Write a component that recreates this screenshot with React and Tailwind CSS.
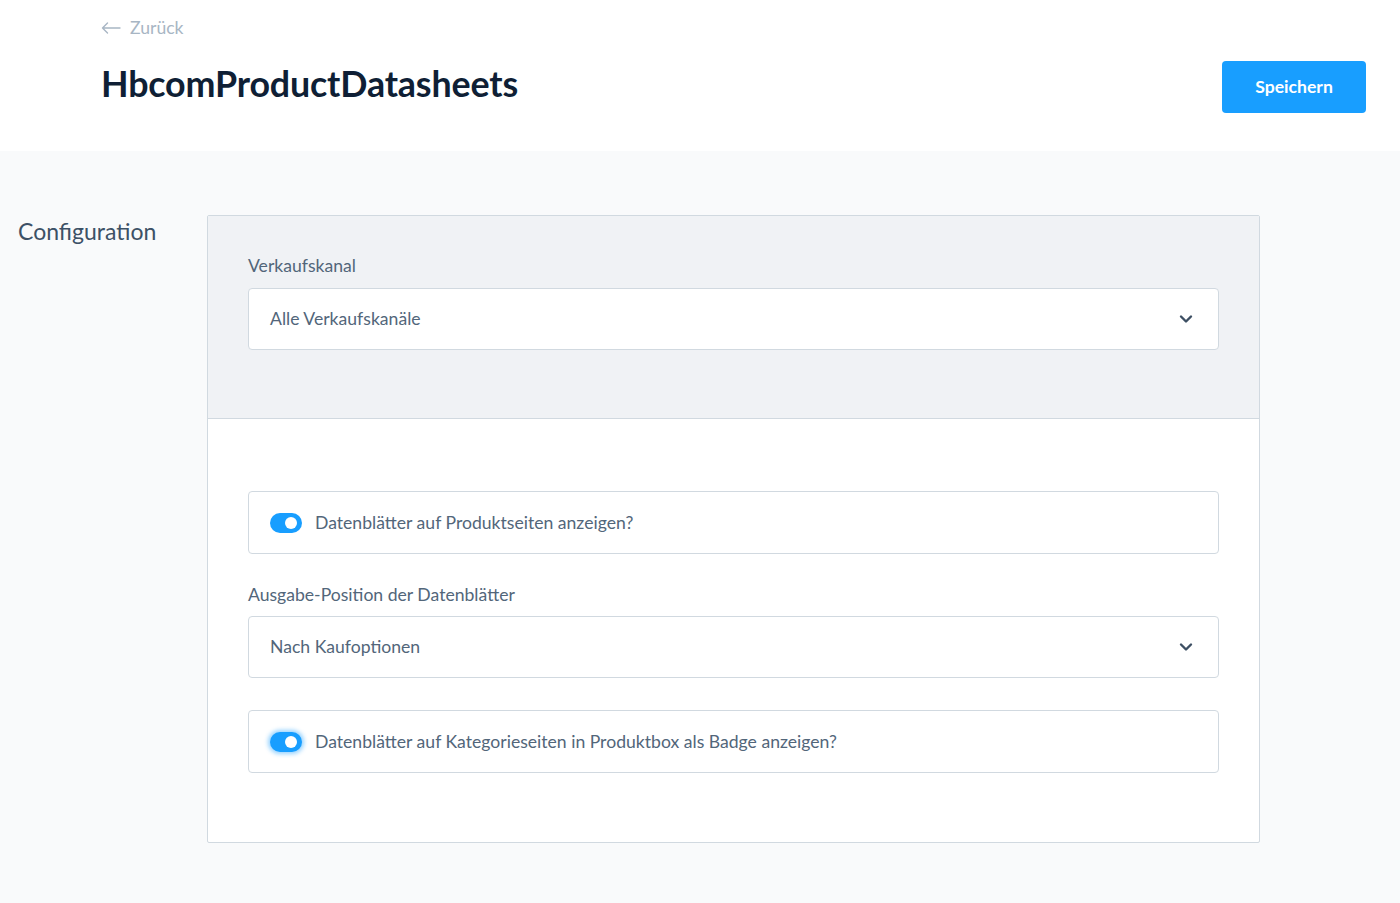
import React from 'react';

const font = { fontFamily: '"Lato", "Open Sans", sans-serif' };

const Chevron = () => (
    <svg width="16" height="16" viewBox="0 0 16 16" fill="none">
        <path d="M3 5.5l5 5 5-5" stroke="#3d4f63" strokeWidth="2.4" strokeLinecap="round" strokeLinejoin="round" />
    </svg>
);

const Select = ({ value }) => (
    <div className="h-[62px] bg-white border border-[#d1d9e0] rounded-[4px] flex items-center justify-between pl-[21px] pr-[24px]">
        <span className="text-[17.6px] leading-[24px] text-[#52667a]">{value}</span>
        <Chevron />
    </div>
);

const Toggle = ({ label, focused }) => (
    <div className="h-[63px] bg-white border border-[#d1d9e0] rounded-[4px] flex items-center pl-[21px] gap-[13px]">
        <div className={`w-[32px] h-[20px] rounded-full bg-[#189eff] flex items-center justify-end pr-[5px] ${focused ? 'shadow-[0_0_4px_2px_rgba(24,158,255,0.45)]' : ''}`}>
            <div className="w-[12px] h-[12px] rounded-full bg-white"></div>
        </div>
        <span className="text-[17.6px] leading-[24px] text-[#52667a]">{label}</span>
    </div>
);

export default function App() {
    return (
        <div className="min-h-[903px] bg-[#f9fafb]" style={font}>
            <header className="h-[151px] bg-white relative px-[101px] pt-[16px]">
                <div className="flex items-center gap-[9px] text-[17.6px] leading-[24px] text-[#a8b6c4]">
                    <svg width="20" height="12" viewBox="0 0 20 12" fill="none">
                        <path d="M19 6H1.5M6.5 1L1.5 6l5 5" stroke="#a8b6c4" strokeWidth="1.4" strokeLinecap="round" strokeLinejoin="round" />
                    </svg>
                    <span>Zurück</span>
                </div>
                <h1 className="mt-[22px] text-[35.8px] leading-[44px] font-bold text-[#0f1f35] tracking-[-0.15px]">HbcomProductDatasheets</h1>
                <button className="absolute left-[1222px] top-[61px] w-[144px] h-[52px] rounded-[4px] bg-[#189eff] text-white text-[17.6px] font-bold">
                    Speichern
                </button>
            </header>

            <main className="flex pt-[64px] pb-[61px]">
                <div className="w-[207px] pl-[18px] pt-[2px]">
                    <h2 className="text-[23px] leading-[28px] text-[#3d5166]">Configuration</h2>
                </div>
                <div className="w-[1053px] border border-[#d1d9e0] rounded-[2px] bg-white">
                    <section className="h-[203px] bg-[#f0f2f5] border-b border-[#d1d9e0] px-[40px] pt-[38px]">
                        <label className="block text-[17.6px] leading-[24px] text-[#52667a] mb-[10px]">Verkaufskanal</label>
                        <Select value="Alle Verkaufskanäle" />
                    </section>
                    <section className="px-[40px] pt-[72px] pb-[69px]">
                        <Toggle label="Datenblätter auf Produktseiten anzeigen?" />
                        <label className="block text-[17.6px] leading-[24px] text-[#52667a] mt-[29px] mb-[9px]">Ausgabe-Position der Datenblätter</label>
                        <Select value="Nach Kaufoptionen" />
                        <div className="mt-[32px]">
                            <Toggle label="Datenblätter auf Kategorieseiten in Produktbox als Badge anzeigen?" focused />
                        </div>
                    </section>
                </div>
            </main>
        </div>
    );
}
